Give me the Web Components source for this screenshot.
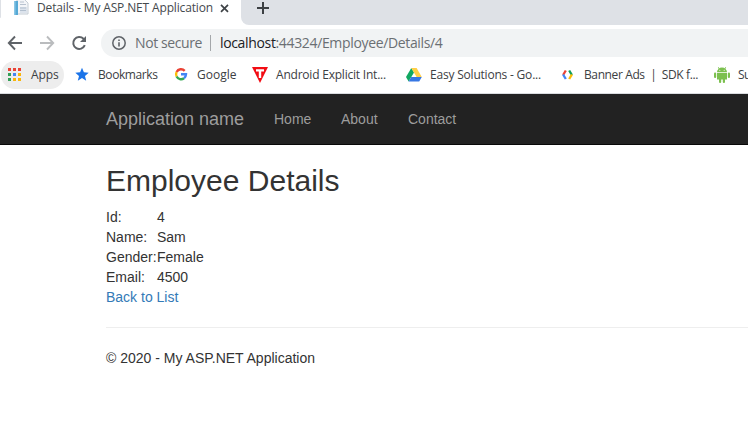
<!DOCTYPE html>
<html lang="en">
<head>
<meta charset="utf-8">
<title>Details - My ASP.NET Application</title>
<style>
html,body{margin:0;height:100%;overflow:hidden;background:#fff}
</style>
</head>
<body>
<browser-window>
  <tab-strip slot="chrome"></tab-strip>
  <address-bar slot="chrome"></address-bar>
  <bookmarks-bar slot="chrome"></bookmarks-bar>
  <site-navbar>
    <nav-link style="--w:37px">Home</nav-link>
    <nav-link style="--w:37px">About</nav-link>
    <nav-link style="--w:48px">Contact</nav-link>
  </site-navbar>
  <employee-details>
    <detail-row label="Id:">4</detail-row>
    <detail-row label="Name:">Sam</detail-row>
    <detail-row label="Gender:">Female</detail-row>
    <detail-row label="Email:">4500</detail-row>
  </employee-details>
</browser-window>
<script>
const define = (name, html, setup) => customElements.define(name, class extends HTMLElement {
  constructor() {
    super();
    this.attachShadow({mode: 'open'}).innerHTML = html;
  }
  connectedCallback() { if (setup) setup(this, this.shadowRoot); }
});

// Text that spreads its letter spacing to fill the width given in "w".
define('fit-text', `<style>:host{display:block;flex:none}span{display:inline-block;white-space:pre;vertical-align:top}</style><span><slot></slot></span>`, (el, root) => {
  const span = root.querySelector('span');
  const w = parseFloat(el.getAttribute('w'));
  const n = el.textContent.length;
  el.style.width = w + 'px';
  const natural = span.getBoundingClientRect().width;
  if (natural) span.style.letterSpacing = ((w - natural) / n).toFixed(3) + 'px';
});

define('tab-strip', `
<style>
:host{display:flex;height:25px;background:#dee1e6}
.tab{display:flex;width:241px;height:25px;background:#fff;font:12px/16px "Open Sans",sans-serif;color:#45494d}
.edge{width:1px;height:18px;background:#dee1e6;border-bottom-right-radius:1px}
.icon{margin:0 8px 0 12px;width:16px;height:16px}
.close{margin:4px 0 0 7px;width:9px;height:9px}
.rest{flex:1;background:#fff}
.rest div{height:25px;background:#dee1e6;border-bottom-left-radius:8px}
.plus{display:block;padding:2px 0 0 16px}
</style>
<div class="tab"><div class="edge"></div>
<svg class="icon" viewBox="0 0 16 16"><path d="M4 -1h7l4 4v11H4z" fill="#f3f5f8" stroke="#c4ccd4"/><path d="M1 1h4v14H1z" fill="#56a9d5"/><path d="M1 1h1.5v14H1z" fill="#8bc7e6"/><path d="M7 2h4M7 4.5h6" stroke="#b8c2cf"/><path d="M7 7h7v6H7z" fill="#dce3ec"/><path d="M7 8h6M7 10.5h6" stroke="#b2bfce"/></svg>
<fit-text w="176">Details - My ASP.NET Application</fit-text>
<svg class="close" viewBox="0 0 9 9"><path d="M1 .8l7 7M8 .8l-7 7" stroke="#3f4347" stroke-width="1.7"/></svg>
</div>
<div class="rest"><div><svg class="plus" width="12" height="12" viewBox="0 0 12 12"><path d="M6 0v12M0 6h12" stroke="#3c4043" stroke-width="2"/></svg></div></div>`);

define('address-bar', `
<style>
:host{display:flex;height:35px;background:#fff;font:14px/20px "Open Sans",sans-serif;color:#6b6f73}
.nav{display:flex;width:101px;padding-top:10px;box-sizing:border-box}
.nav svg{flex:none;width:16px;height:16px}
.nav svg:nth-child(1){margin-left:7px}
.nav svg:nth-child(2){margin-left:16px}
.nav svg:nth-child(3){margin-left:16px}
.pill{display:flex;align-items:center;flex:1;height:28px;margin-top:4px;background:#f1f3f4;border-radius:14px 0 0 14px;padding-left:11px}
.info{width:14px;height:14px;margin-right:9px}
.bar{width:1px;height:16px;background:#a4a7aa;margin:0 9px 0 8px}
b{font-weight:400;color:#202124}
</style>
<div class="nav">
<svg viewBox="0 0 16 16"><path d="M15 8H2M8 1.5L1.8 8 8 14.5" fill="none" stroke="#5f6368" stroke-width="1.9"/></svg>
<svg viewBox="0 0 16 16"><path d="M1 8h13M8 1.5L14.2 8 8 14.5" fill="none" stroke="#babcbe" stroke-width="1.9"/></svg>
<svg viewBox="0 0 16 16"><path d="M13.8 10.2A6 6 0 1 1 12.5 3.7L14 5.2" fill="none" stroke="#5f6368" stroke-width="2"/><path d="M15 1v6H9z" fill="#5f6368"/></svg>
</div>
<div class="pill">
<svg class="info" viewBox="0 0 14 14"><circle cx="7" cy="7" r="6.2" fill="none" stroke="#5f6368" stroke-width="1.5"/><path d="M7 6.2v4.3M7 3.5v1.6" stroke="#5f6368" stroke-width="1.6"/></svg>
<fit-text w="67">Not secure</fit-text><div class="bar"></div>
<fit-text w="222.5"><b>localhost</b>:44324/Employee/Details/4</fit-text>
</div>`);

define('book-mark', `
<style>
:host{display:flex;align-items:center;flex:none;height:28px}
.icon{display:flex;align-items:center;width:16px;height:16px}
.label{margin-left:var(--gap,8px)}
</style>
<div class="icon"><slot name="icon"></slot></div><div class="label"><slot></slot></div>`);

define('bookmarks-bar', `
<style>
:host{display:grid;grid-template-columns:75px 99px 78px 154px 154px 154px 34px;align-items:start;height:34px;box-sizing:border-box;overflow:hidden;background:#fff;font:12px/16px "Open Sans",sans-serif;color:#3c4043;border-bottom:1px solid #dadce0}
book-mark{margin-top:1px}
.near{--gap:7px}
.apps{width:57px;margin-left:1px;padding-left:6px;background:#ededed;border-radius:14px}
svg{display:block}
</style>
<book-mark class="apps"><svg slot="icon" width="16" height="16" viewBox="0 0 16 16"><path d="M1 1h3v3H1zM6 1h3v3H6zM11 1h3v3h-3z" fill="#ea4335"/><path d="M1 6h3v3H1zM1 11h3v3H1z" fill="#34a058"/><path d="M6 6h3v3H6z" fill="#4285f4"/><path d="M11 6h3v3h-3zM6 11h3v3H6zM11 11h3v3h-3z" fill="#f9b50b"/></svg><fit-text w="27.5">Apps</fit-text></book-mark>
<book-mark class="near"><svg slot="icon" width="16" height="16" viewBox="0 0 16 16"><path d="M7 .8l1.9 4.5 4.8.4-3.7 3.2 1.2 4.8L7 11.1l-4.2 2.6L4 8.9.3 5.7l4.8-.4z" fill="#1a73e8"/></svg><fit-text w="59.5">Bookmarks</fit-text></book-mark>
<book-mark class="near"><svg slot="icon" width="16" height="16" viewBox="0 0 16 16"><g fill="none" stroke-width="2.4"><path d="M2.6 5A5 5 0 0 1 10.7 3.8" stroke="#ea4335"/><path d="M2.6 5A5 5 0 0 0 2.6 9.5" stroke="#fbbc05"/><path d="M2.6 9.5A5 5 0 0 0 10 11.2" stroke="#34a853"/><path d="M7 7.3h5A5 5 0 0 1 10 11.2" stroke="#4285f4"/></g></svg><fit-text w="39.5">Google</fit-text></book-mark>
<book-mark><svg slot="icon" width="16" height="16" viewBox="0 0 16 16"><path d="M0 0h16L8 16z" fill="#f20d14"/><path d="M4 2.2h8v2.2H9.2V11H6.8V4.4H4z" fill="#fff"/></svg><fit-text w="110">Android Explicit Int...</fit-text></book-mark>
<book-mark><svg slot="icon" width="16" height="16" viewBox="0 0 16 16"><path d="M5.3 1L0 10l2.6 4.5L8 5.5z" fill="#11a861"/><path d="M5.3 1h5.3l5.2 9h-5.2z" fill="#ffcf48"/><path d="M5.2 10h10.6l-2.6 4.5H2.6z" fill="#3777e3"/></svg><fit-text w="111">Easy Solutions - Go...</fit-text></book-mark>
<book-mark><svg slot="icon" width="16" height="16" viewBox="0 0 16 16"><g fill="none" stroke-width="2.3"><path d="M5.8 3.5L3.1 8" stroke="#ea4335"/><path d="M3.1 7.5L5.8 12" stroke="#4285f4"/><path d="M9.2 3.5L11.9 8" stroke="#109d58"/><path d="M11.9 7.5L9.2 12" stroke="#fbbc05"/></g></svg><fit-text w="114">Banner Ads  |  SDK f...</fit-text></book-mark>
<book-mark><svg slot="icon" width="16" height="16" viewBox="0 0 16 16"><g fill="#7cc04f"><path d="M3 5a5 4.4 0 0 1 10 0zM3 5.8h10v6.6H3z"/><rect x="0" y="5.6" width="2.2" height="5.4" rx="1.1"/><rect x="13.8" y="5.6" width="2.2" height="5.4" rx="1.1"/><rect x="5" y="11" width="2.2" height="5" rx="1"/><rect x="8.8" y="11" width="2.2" height="5" rx="1"/><path d="M4.5 0l1.3 2-.7.4L3.9.4zM11.5 0l-1.3 2 .7.4L12.1.4z"/></g><circle cx="5.8" cy="3.3" r=".55" fill="#fff"/><circle cx="10.2" cy="3.3" r=".55" fill="#fff"/></svg><fit-text w="13">Su</fit-text></book-mark>`);

define('nav-link', `
<style>:host{display:block;width:var(--w);font-size:14px;line-height:20px;margin-right:30px}</style><slot></slot>`);

define('site-navbar', `
<style>
:host{display:flex;height:51px;box-sizing:border-box;padding:15px 0 0 106px;background:#222;border-bottom:1px solid #080808;color:#9d9d9d;font-family:"Liberation Sans",Arial,sans-serif}
.brand{font-size:18px;line-height:20px;width:138px;margin-right:30px}
</style>
<fit-text class="brand" w="138">Application name</fit-text><slot></slot>`);

define('detail-row', `
<style>:host{display:grid;grid-template-columns:51px auto;height:20px}</style>
<span class="label"></span><slot></slot>`, (el, root) => {
  root.querySelector('.label').textContent = el.getAttribute('label');
});

define('employee-details', `
<style>
:host{display:block;padding:19px 0 0 106px;font:14px/20px "Liberation Sans",Arial,sans-serif;color:#333}
h2{font-size:30px;font-weight:500;line-height:33px;margin:0 0 10px}
a{display:block;color:#337ab7;text-decoration:none}
hr{border:0;border-top:1px solid #eee;margin:20px 0}
p{margin:0}
</style>
<h2><fit-text w="233.5">Employee Details</fit-text></h2>
<slot></slot>
<a>Back to List</a>
<hr>
<p>© 2020 - My ASP.NET Application</p>`);

define('browser-window', `
<style>:host{display:block;width:748px;height:436px;overflow:hidden;background:#fff}</style>
<slot name="chrome"></slot><slot></slot>`);
</script>
</body>
</html>
